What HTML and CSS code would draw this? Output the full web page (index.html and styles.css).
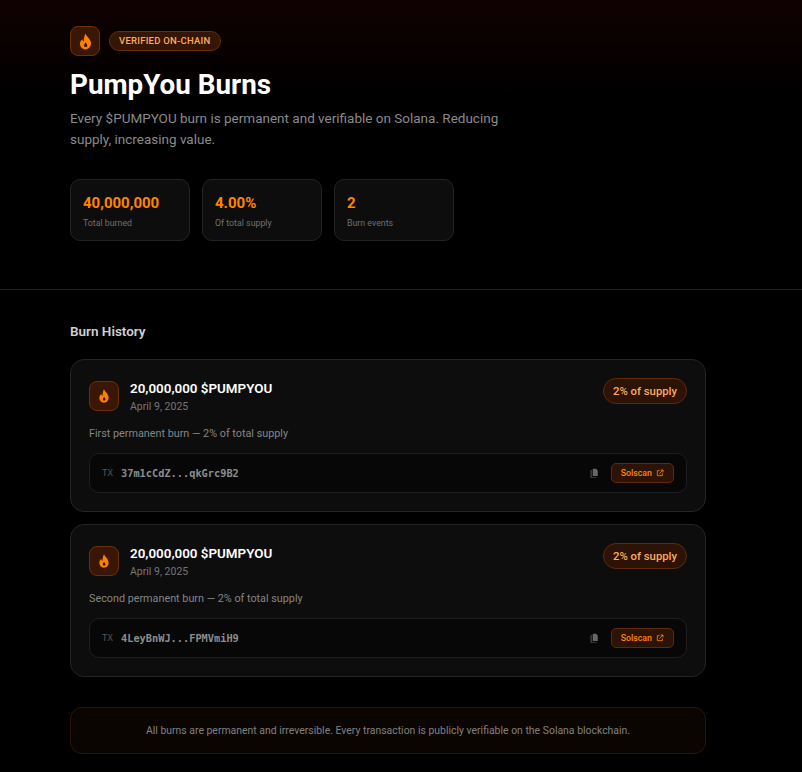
FILE: index.html
```html
<!DOCTYPE html>
<html lang="en">
<head>
    <meta charset="UTF-8">
    <meta name="viewport" content="width=device-width, initial-scale=1.0">
    <title>PumpYou Burns</title>
    <link rel="stylesheet" href="styles.css">
</head>
<body>
    <header class="hero">
        <div class="hero-top">
            <div class="flame-box">
                <svg class="flame flame-lg" viewBox="0 0 24 24"><path d="M12 2c1 3.500 5.800 6.300 6.800 11 .8 4.800-2.600 9-6.800 9s-7.500-3.600-6.900-8c.3-2.300 1.500-4 2.900-5 .1 1.400.6 2.500 1.600 3.100C10 9 10.300 5 12 2zm.2 11c-.5 1.300-2 2.300-2 4 0 1.200.9 2 2 2s2-.8 2-2c0-1.600-1.500-2.700-2-4z"/></svg>
            </div>
            <span class="verified">VERIFIED ON-CHAIN</span>
        </div>
        <h1>PumpYou Burns</h1>
        <p class="lead">Every $PUMPYOU burn is permanent and verifiable on Solana. Reducing supply, increasing value.</p>
        <div class="stats">
            <div class="stat">
                <div class="stat-value">40,000,000</div>
                <div class="stat-label">Total burned</div>
            </div>
            <div class="stat">
                <div class="stat-value">4.00%</div>
                <div class="stat-label">Of total supply</div>
            </div>
            <div class="stat">
                <div class="stat-value">2</div>
                <div class="stat-label">Burn events</div>
            </div>
        </div>
    </header>

    <main class="content">
        <h2>Burn History</h2>

        <div class="burn">
            <div class="burn-top">
                <div class="flame-box">
                    <svg class="flame" viewBox="0 0 24 24"><path d="M12 2c1 3.500 5.800 6.300 6.800 11 .8 4.800-2.600 9-6.800 9s-7.500-3.600-6.900-8c.3-2.300 1.500-4 2.900-5 .1 1.400.6 2.500 1.600 3.100C10 9 10.300 5 12 2zm.2 11c-.5 1.300-2 2.300-2 4 0 1.200.9 2 2 2s2-.8 2-2c0-1.600-1.500-2.700-2-4z"/></svg>
                </div>
                <div class="burn-title">
                    <div class="burn-amount">20,000,000 $PUMPYOU</div>
                    <div class="burn-date">April 9, 2025</div>
                </div>
                <span class="supply">2% of supply</span>
            </div>
            <p class="burn-note">First permanent burn — 2% of total supply</p>
            <div class="tx">
                <span class="tx-label">TX</span>
                <span class="tx-hash">37m1cCdZ...qkGrc9B2</span>
                <svg class="copy" viewBox="0 0 24 24"><path d="M9 2h8l4 4v13H9z"/><path d="M6 5v17h12v1.500H4V5z"/></svg>
                <a class="solscan" href="#">Solscan
                    <svg class="ext" viewBox="0 0 24 24"><path d="M11 5H4v15h15v-7M10 14 21 3M14 3h7v7"/></svg>
                </a>
            </div>
        </div>

        <div class="burn">
            <div class="burn-top">
                <div class="flame-box">
                    <svg class="flame" viewBox="0 0 24 24"><path d="M12 2c1 3.500 5.800 6.300 6.800 11 .8 4.800-2.600 9-6.800 9s-7.500-3.600-6.900-8c.3-2.300 1.500-4 2.900-5 .1 1.400.6 2.500 1.600 3.100C10 9 10.300 5 12 2zm.2 11c-.5 1.300-2 2.300-2 4 0 1.200.9 2 2 2s2-.8 2-2c0-1.600-1.500-2.700-2-4z"/></svg>
                </div>
                <div class="burn-title">
                    <div class="burn-amount">20,000,000 $PUMPYOU</div>
                    <div class="burn-date">April 9, 2025</div>
                </div>
                <span class="supply">2% of supply</span>
            </div>
            <p class="burn-note">Second permanent burn — 2% of total supply</p>
            <div class="tx">
                <span class="tx-label">TX</span>
                <span class="tx-hash">4LeyBnWJ...FPMVmiH9</span>
                <svg class="copy" viewBox="0 0 24 24"><path d="M9 2h8l4 4v13H9z"/><path d="M6 5v17h12v1.500H4V5z"/></svg>
                <a class="solscan" href="#">Solscan
                    <svg class="ext" viewBox="0 0 24 24"><path d="M11 5H4v15h15v-7M10 14 21 3M14 3h7v7"/></svg>
                </a>
            </div>
        </div>

        <div class="notice">All burns are permanent and irreversible. Every transaction is publicly verifiable on the Solana blockchain.</div>
    </main>
</body>
</html>
```

FILE: styles.css
```css
* {
    box-sizing: border-box;
}
body {
    margin: 0;
    background: #000;
    color: #fff;
    font-family: Roboto, "Open Sans", sans-serif;
}
.hero {
    padding: 26px 70px 48px;
    border-bottom: 1px solid #222;
    background: linear-gradient(180deg, #100101 0, #000 100px);
}
.hero-top {
    display: flex;
    align-items: center;
    gap: 9px;
}
.flame-box {
    width: 30px;
    height: 30px;
    flex: none;
    display: flex;
    align-items: center;
    justify-content: center;
    background: #3a1705;
    border: 1px solid #6b2f0a;
    border-radius: 8px;
}
.flame {
    width: 16px;
    height: 16px;
    fill: #ff8000;
}
.flame-lg {
    width: 19px;
    height: 19px;
}
.verified {
    padding: 0 9px;
    height: 20px;
    line-height: 18px;
    font-size: 9.500px;
    font-weight: 500;
    letter-spacing: 0.25px;
    color: #ffaa5c;
    background: #351504;
    border: 1px solid #672c09;
    border-radius: 10px;
}
h1 {
    margin: 11px 0 0;
    font-size: 27.800px;
    line-height: 36px;
    font-weight: 700;
}
.lead {
    margin: 5px 0 0;
    width: 440px;
    font-size: 13.500px;
    line-height: 21px;
    color: #8a8a8a;
}
.stats {
    display: flex;
    gap: 12px;
    margin-top: 29px;
}
.stat {
    width: 120px;
    height: 62px;
    padding: 13px 12px;
    background: #0d0d0d;
    border: 1px solid #222;
    border-radius: 10px;
}
.stat-value {
    font-size: 15px;
    line-height: 20px;
    font-weight: 700;
    color: #ff8500;
}
.stat-label {
    margin-top: 3px;
    font-size: 8.800px;
    line-height: 14px;
    color: #707070;
}
.content {
    padding: 32px 96px 18px 70px;
}
h2 {
    margin: 0 0 18px;
    font-size: 13.500px;
    line-height: 19px;
    font-weight: 600;
    color: #d0d0d0;
}
.burn {
    padding: 18px;
    margin-bottom: 12px;
    background: #0d0d0d;
    border: 1px solid #242424;
    border-radius: 14px;
}
.burn-top {
    display: flex;
    gap: 11px;
}
.burn-top .flame-box {
    margin-top: 3px;
}
.burn-title {
    flex: 1;
    padding-top: 1px;
}
.burn-amount {
    font-size: 13.400px;
    line-height: 20px;
    font-weight: 600;
}
.burn-date {
    font-size: 10.500px;
    line-height: 16px;
    color: #777;
}
.supply {
    height: 26px;
    padding: 0 9px;
    line-height: 26px;
    font-size: 11.300px;
    font-weight: 500;
    color: #ffaa5c;
    background: #2c1305;
    border: 1px solid #5f2a09;
    border-radius: 13px;
}
.burn-note {
    margin: 11px 0 0;
    font-size: 10.800px;
    line-height: 15px;
    color: #858585;
}
.tx {
    display: flex;
    align-items: center;
    height: 40px;
    margin-top: 12px;
    padding: 0 12px;
    background: #070707;
    border: 1px solid #1e1e1e;
    border-radius: 10px;
}
.tx-label {
    width: 19px;
    font-family: "DejaVu Sans Mono", monospace;
    font-size: 9px;
    color: #555;
}
.tx-hash {
    flex: 1;
    font-family: "DejaVu Sans Mono", monospace;
    font-size: 10.300px;
    font-weight: 700;
    color: #8d8d8d;
}
.copy {
    width: 10px;
    height: 10px;
    fill: #666;
    margin-right: 12px;
}
.solscan {
    display: flex;
    align-items: center;
    gap: 4px;
    height: 20px;
    padding: 0 9px;
    font-size: 8.800px;
    font-weight: 500;
    color: #ff8500;
    text-decoration: none;
    background: #2c1305;
    border: 1px solid #5f2a09;
    border-radius: 5px;
}
.ext {
    width: 8px;
    height: 8px;
    fill: none;
    stroke: #ff8500;
    stroke-width: 2.500;
}
.notice {
    margin-top: 30px;
    height: 47px;
    line-height: 45px;
    text-align: center;
    font-size: 10.450px;
    color: #808080;
    background: #0b0502;
    border: 1px solid #2c1505;
    border-radius: 12px;
}
```
